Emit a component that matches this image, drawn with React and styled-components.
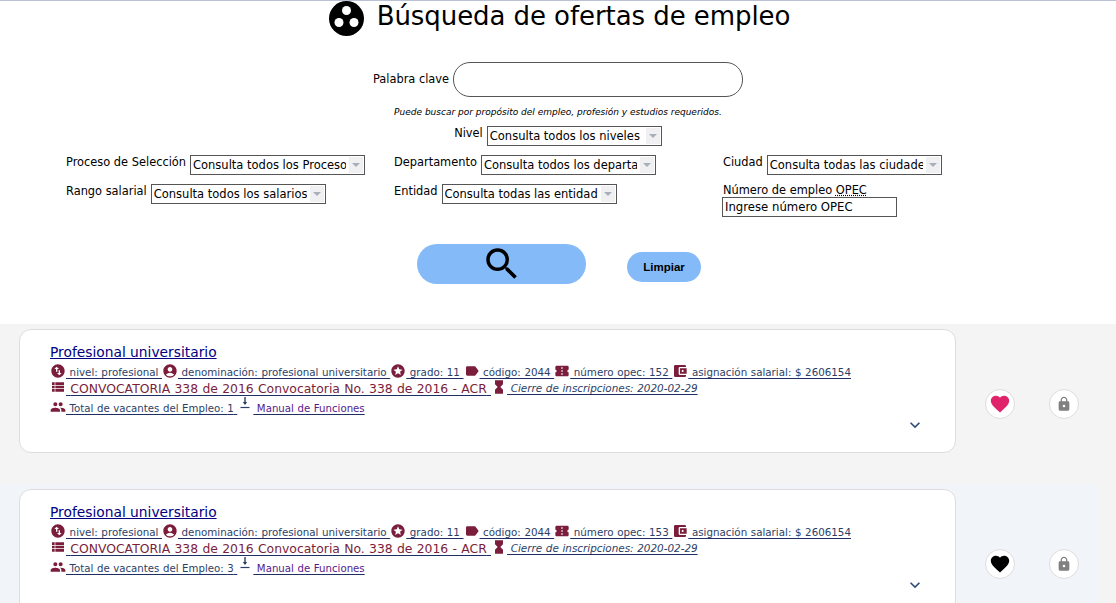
import React from 'react';
import styled, { createGlobalStyle } from 'styled-components';
import {
  MdSwapVerticalCircle,
  MdAccountCircle,
  MdStars,
  MdLabel,
  MdConfirmationNumber,
  MdAccountBalanceWallet,
  MdViewList,
  MdHourglassFull,
  MdPeople,
  MdFavorite,
  MdLock,
  MdKeyboardArrowDown,
  MdSearch,
} from 'react-icons/md';

const Global = createGlobalStyle`
  html, body {
    margin: 0;
    height: 100%;
    overflow: hidden;
    background: #ffffff;
    font-family: "DejaVu Sans", Verdana, sans-serif;
  }
`;

const Page = styled.div`
  border-top: 1px solid #b9c1d3;
  height: 602px;
  overflow: hidden;
`;

const Header = styled.header`
  display: flex;
  justify-content: center;
  align-items: flex-start;
  gap: 13px;
  height: 35px;
  padding-left: 3px;
`;

const Title = styled.h1`
  margin: 0;
  font-size: 26px;
  line-height: 30px;
  font-weight: 400;
  letter-spacing: -0.07px;
  color: #000;
`;

const Form = styled.form`
  box-sizing: border-box;
  height: 288px;
  padding-top: 26px;
  font-size: 11.4px;
  color: #000;
`;

const KeywordRow = styled.div`
  display: flex;
  justify-content: center;
  align-items: center;
  gap: 4px;
`;

const KeywordInput = styled.input`
  box-sizing: border-box;
  width: 290px;
  height: 35px;
  border: 1px solid #555;
  border-radius: 17px;
  background: #fff;
  outline: none;
`;

const Hint = styled.p`
  margin: 9px 0 0;
  height: 12px;
  text-align: center;
  font-size: 9px;
  line-height: 12px;
  font-style: italic;
`;

const LevelRow = styled.div`
  display: flex;
  justify-content: center;
  gap: 4px;
  margin-top: 8px;
`;

const Label = styled.label`
  line-height: 15px;
  white-space: nowrap;
`;

const SelectBox = styled.div`
  box-sizing: border-box;
  display: flex;
  align-items: center;
  flex: none;
  width: 175px;
  height: 20px;
  padding: 1px;
  border: 1px solid #555;
  background: #fff;
`;

const NativeSelect = styled.select`
  appearance: none;
  flex: 1;
  min-width: 0;
  height: 100%;
  margin: 0;
  padding: 0 0 0 1px;
  border: 0;
  outline: none;
  background: transparent;
  color: #000;
  font: 11.5px "DejaVu Sans", Verdana, sans-serif;
`;

const Arrow = styled.span`
  display: flex;
  align-items: center;
  justify-content: center;
  flex: none;
  width: 14px;
  height: 100%;
  margin-left: 3px;
  background: #f0f0f3;

  &::after {
    content: '';
    border-left: 4px solid transparent;
    border-right: 4px solid transparent;
    border-top: 4px solid #a9aebb;
  }
`;

const FilterGrid = styled.div`
  display: grid;
  grid-template-columns: 328px 329px 1fr;
  grid-auto-rows: 28.5px;
  margin-top: 9px;
  padding-left: 66px;
`;

const Filter = styled.div`
  display: flex;
  align-items: flex-start;
  gap: 4px;
`;

const StackedFilter = styled.div`
  display: flex;
  flex-direction: column;
  align-items: flex-start;
`;

const OpecLabel = styled.label`
  flex: none;
  line-height: 13px;
  white-space: nowrap;

  abbr {
    text-decoration: underline dotted;
  }
`;

const OpecInput = styled.input`
  box-sizing: border-box;
  flex: none;
  width: 175px;
  height: 20px;
  margin-left: -1px;
  padding: 0 2px;
  border: 1px solid #555;
  outline: none;
  color: #000;
  font: 11.7px "DejaVu Sans", Verdana, sans-serif;

  &::placeholder {
    color: #000;
    opacity: 1;
  }
`;

const Buttons = styled.div`
  display: flex;
  align-items: flex-start;
  gap: 41px;
  margin-top: 32px;
  padding-left: 417px;
`;

const SearchButton = styled.button`
  display: flex;
  align-items: center;
  justify-content: center;
  width: 169px;
  height: 40px;
  padding: 0;
  border: 0;
  border-radius: 20px;
  background: #85baf8;
  color: #000;
`;

const ClearButton = styled.button`
  width: 74px;
  height: 30px;
  margin-top: 8px;
  padding: 0;
  border: 0;
  border-radius: 15px;
  background: #85baf8;
  color: #000;
  font: 700 11.5px "Liberation Sans", Arial, sans-serif;
`;

const Results = styled.section`
  height: 279px;
  padding-right: 19px;
  background: #f4f4f4;
`;

const Row = styled.article`
  display: flex;
  height: 155px;
  padding: 5px 0 0 19px;
  background: ${(p) => (p.$hovered ? '#f1f4f9' : 'transparent')};
`;

const Card = styled.div`
  box-sizing: border-box;
  display: flex;
  flex-direction: column;
  flex: none;
  width: 937px;
  height: 124px;
  padding: 14px 30px 0;
  border: 1px solid #ddd;
  border-radius: 12px;
  background: #fff;
`;

const JobTitle = styled.a`
  align-self: flex-start;
  margin-bottom: 3px;
  color: #000080;
  font-size: 13.8px;
  line-height: 16px;
  text-decoration: underline;
`;

const MetaLine = styled.div`
  display: flex;
  align-items: flex-end;
  height: 16px;
  margin-top: ${(p) => p.$top || 0}px;
  white-space: pre;
`;

const MetaLink = styled.a`
  color: ${(p) => (p.$visited ? '#551a8b' : '#2c3e66')};
  font-size: ${(p) => p.$size || 10.3}px;
  font-style: ${(p) => (p.$italic ? 'italic' : 'normal')};
  line-height: 13px;
  word-spacing: 0.33px;
  text-decoration: underline;
  text-decoration-color: #1f2f63;
  text-underline-offset: 2px;
`;

const Maroon = styled.span`
  color: #7b1e3b;
`;

const MetaIcon = styled.span`
  display: flex;
  flex: none;
  align-self: flex-start;
  margin-top: ${(p) => p.$lift || 0}px;
  color: #7b1e3b;
  font-size: 16px;
`;

const Expand = styled.div`
  display: flex;
  justify-content: flex-end;
  color: #2f4a78;
  font-size: 20px;
`;

const Actions = styled.div`
  display: flex;
  gap: 34px;
  padding: 60px 0 0 29px;
`;

const RoundButton = styled.button`
  display: flex;
  align-items: center;
  justify-content: center;
  width: 30px;
  height: 30px;
  padding: 0;
  border: 1px solid #ddd;
  border-radius: 50%;
  background: #fff;
  color: ${(p) => p.$color};
  font-size: ${(p) => p.$size}px;
`;

const jobs = [
  { opec: 152, vacancies: 1, liked: false },
  { opec: 153, vacancies: 3, liked: true },
];

const Logo = () => (
  <svg width="35" height="35" viewBox="0 0 35 35">
    <circle cx="17.5" cy="17.5" r="17.5" fill="#000" />
    <circle cx="17.5" cy="9.5" r="4.5" fill="#fff" />
    <circle cx="10" cy="21.5" r="4.5" fill="#fff" />
    <circle cx="25" cy="21.5" r="4.5" fill="#fff" />
  </svg>
);

const DownloadIcon = () => (
  <svg width="16" height="16" viewBox="0 0 16 16">
    <path d="M8 0v7" stroke="#2c3e66" strokeWidth="1.4" />
    <path d="M5.8 5 8 8l2.2-3z" fill="#2c3e66" />
    <path d="M3.5 10.5h9" stroke="#2c3e66" strokeWidth="1.2" />
  </svg>
);

const JobCard = ({ opec, vacancies, liked }) => (
  <Row $hovered={liked}>
    <Card>
      <JobTitle href="#">Profesional universitario</JobTitle>
      <MetaLine>
        <MetaIcon><MdSwapVerticalCircle /></MetaIcon>
        <MetaLink href="#"> nivel: profesional </MetaLink>
        <MetaIcon><MdAccountCircle /></MetaIcon>
        <MetaLink href="#"> denominación: profesional universitario </MetaLink>
        <MetaIcon><MdStars /></MetaIcon>
        <MetaLink href="#"> grado: 11 </MetaLink>
        <MetaIcon><MdLabel /></MetaIcon>
        <MetaLink href="#"> código: 2044 </MetaLink>
        <MetaIcon><MdConfirmationNumber /></MetaIcon>
        <MetaLink href="#"> número opec: {opec} </MetaLink>
        <MetaIcon><MdAccountBalanceWallet /></MetaIcon>
        <MetaLink href="#"> asignación salarial: $ 2606154</MetaLink>
      </MetaLine>
      <MetaLine>
        <MetaIcon><MdViewList /></MetaIcon>
        <MetaLink href="#" $size={12.4}> <Maroon>CONVOCATORIA 338 de 2016 Convocatoria No. 338 de 2016 - ACR</Maroon> </MetaLink>
        <MetaIcon><MdHourglassFull /></MetaIcon>
        <MetaLink href="#" $italic $size={10.4}> Cierre de inscripciones: 2020-02-29</MetaLink>
      </MetaLine>
      <MetaLine $top={4}>
        <MetaIcon><MdPeople /></MetaIcon>
        <MetaLink href="#" $size={10.2}> Total de vacantes del Empleo: {vacancies} </MetaLink>
        <MetaIcon $lift={-2}><DownloadIcon /></MetaIcon>
        <MetaLink href="#" $visited $size={10.2}> Manual de Funciones</MetaLink>
      </MetaLine>
      <Expand><MdKeyboardArrowDown /></Expand>
    </Card>
    <Actions>
      <RoundButton $color={liked ? '#000' : '#e0246b'} $size={22}><MdFavorite /></RoundButton>
      <RoundButton $color="#808080" $size={16}><MdLock /></RoundButton>
    </Actions>
  </Row>
);

const App = () => (
  <Page>
    <Global />
    <Header>
      <Logo />
      <Title>Búsqueda de ofertas de empleo</Title>
    </Header>
    <Form onSubmit={(e) => e.preventDefault()}>
      <KeywordRow>
        <Label htmlFor="clave">Palabra clave</Label>
        <KeywordInput id="clave" type="text" />
      </KeywordRow>
      <Hint>Puede buscar por propósito del empleo, profesión y estudios requeridos.</Hint>
      <LevelRow>
        <Label>Nivel</Label>
        <SelectBox>
          <NativeSelect><option>Consulta todos los niveles</option></NativeSelect>
          <Arrow />
        </SelectBox>
      </LevelRow>
      <FilterGrid>
        <Filter>
          <Label>Proceso de Selección</Label>
          <SelectBox>
            <NativeSelect><option>Consulta todos los Procesos</option></NativeSelect>
            <Arrow />
          </SelectBox>
        </Filter>
        <Filter>
          <Label>Departamento</Label>
          <SelectBox>
            <NativeSelect><option>Consulta todos los departamentos</option></NativeSelect>
            <Arrow />
          </SelectBox>
        </Filter>
        <Filter>
          <Label>Ciudad</Label>
          <SelectBox>
            <NativeSelect><option>Consulta todas las ciudades</option></NativeSelect>
            <Arrow />
          </SelectBox>
        </Filter>
        <Filter>
          <Label>Rango salarial</Label>
          <SelectBox>
            <NativeSelect><option>Consulta todos los salarios</option></NativeSelect>
            <Arrow />
          </SelectBox>
        </Filter>
        <Filter>
          <Label>Entidad</Label>
          <SelectBox>
            <NativeSelect><option>Consulta todas las entidades</option></NativeSelect>
            <Arrow />
          </SelectBox>
        </Filter>
        <StackedFilter>
          <OpecLabel htmlFor="opec">Número de empleo <abbr>OPEC</abbr></OpecLabel>
          <OpecInput id="opec" type="text" placeholder="Ingrese número OPEC" />
        </StackedFilter>
      </FilterGrid>
      <Buttons>
        <SearchButton type="submit" aria-label="Buscar"><MdSearch size={42} /></SearchButton>
        <ClearButton type="button">Limpiar</ClearButton>
      </Buttons>
    </Form>
    <Results>
      {jobs.map((job) => (
        <JobCard key={job.opec} {...job} />
      ))}
    </Results>
  </Page>
);

export default App;
